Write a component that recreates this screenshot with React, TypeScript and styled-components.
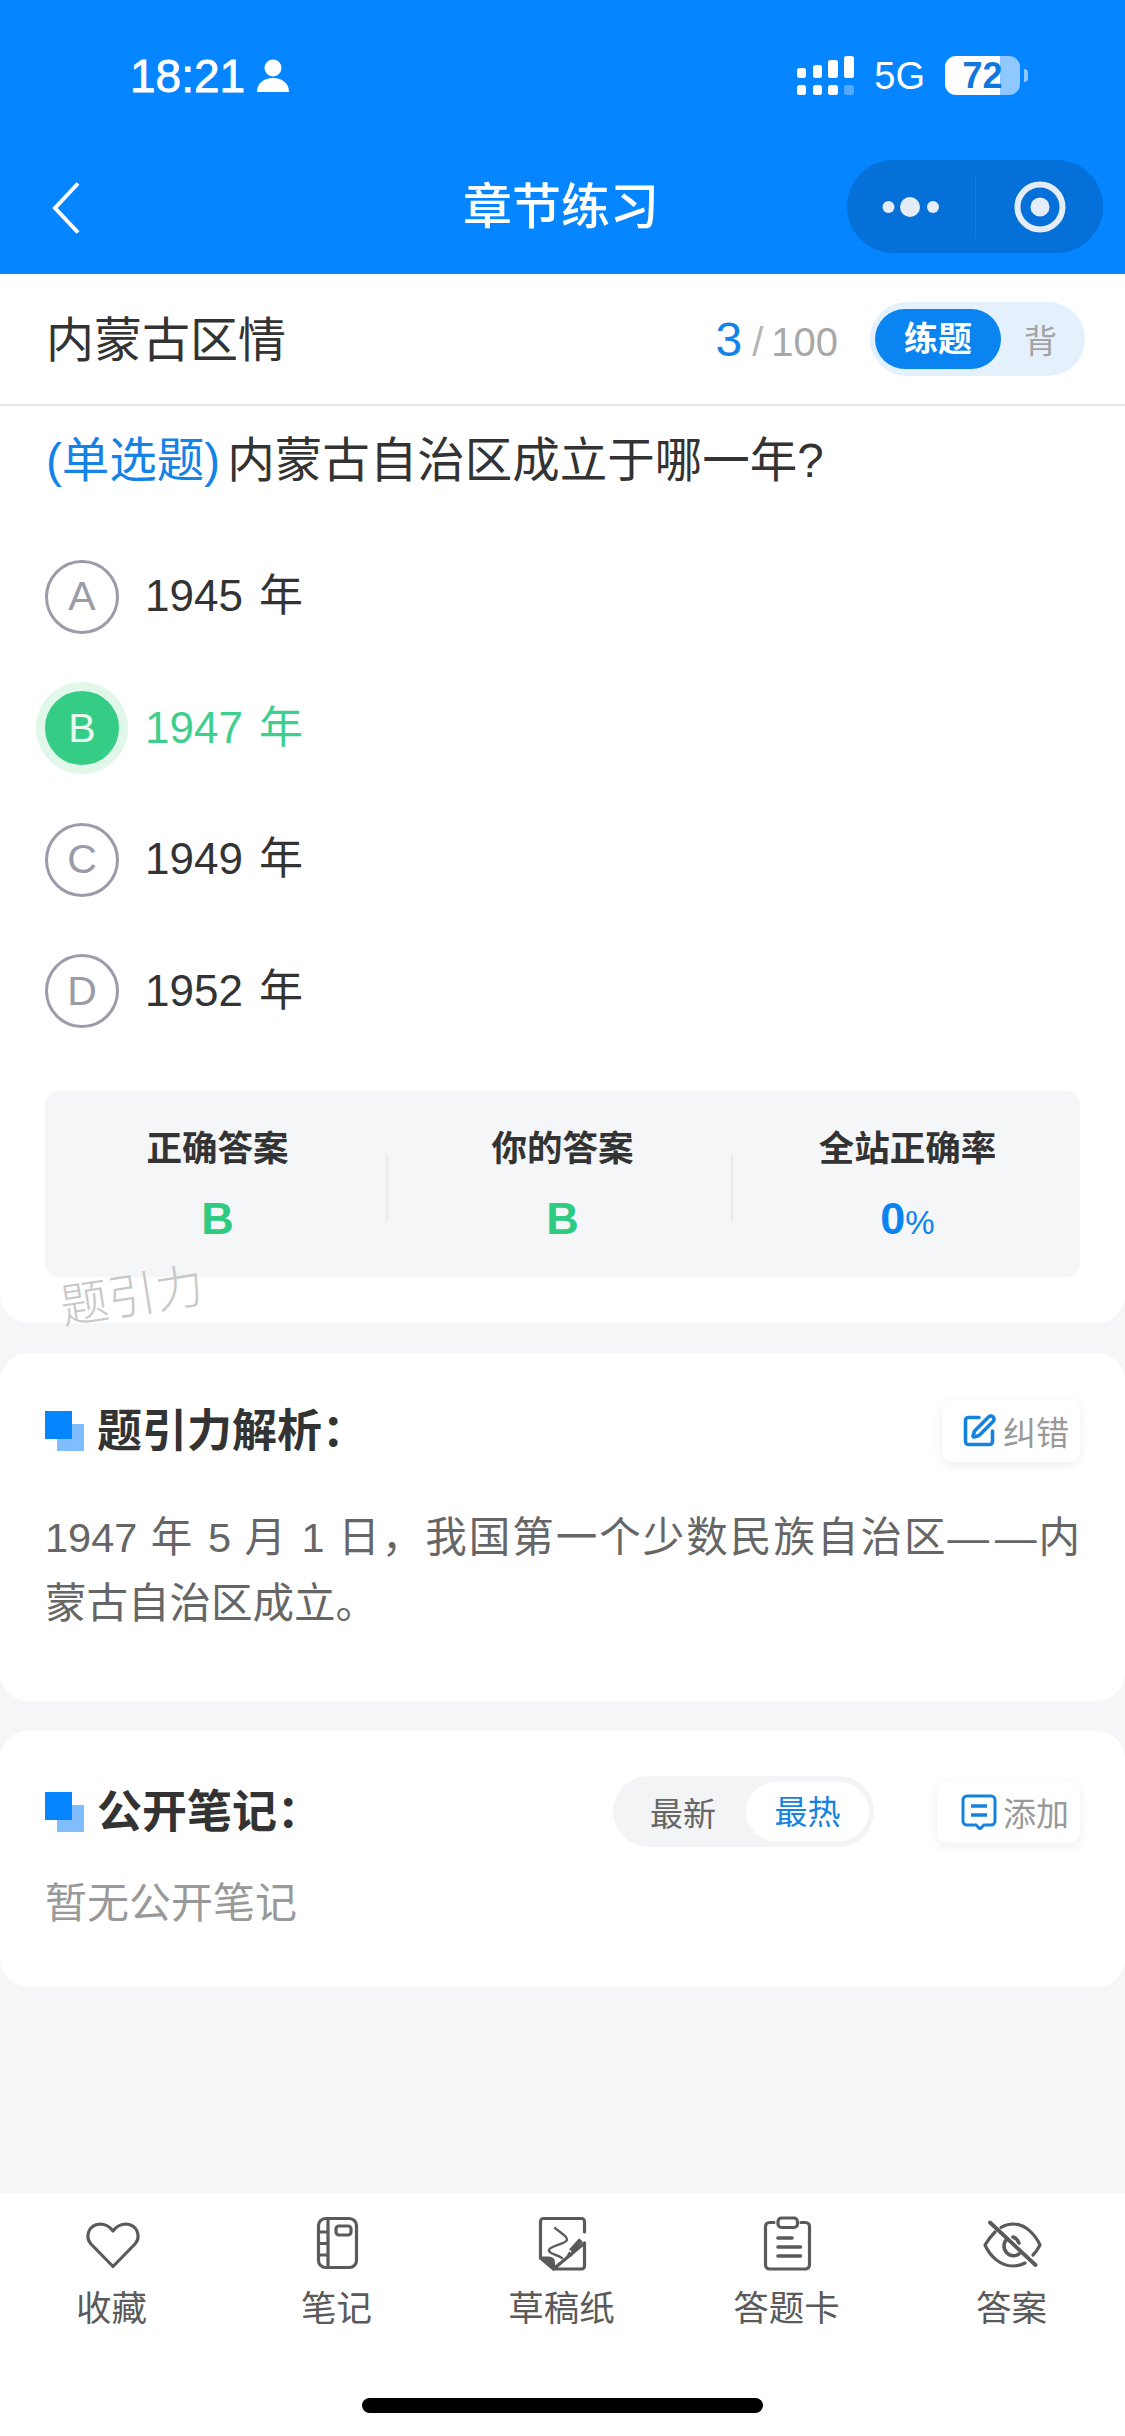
import { FunctionComponent } from "react";
import styled, { createGlobalStyle } from "styled-components";
import { SquarePen } from "lucide-react";

const GlobalStyle = createGlobalStyle`
  html, body {
    margin: 0;
    padding: 0;
    background: #f4f6f8;
  }
  * {
    box-sizing: border-box;
  }
`;

const Page = styled.div`
  width: 1125px;
  height: 2436px;
  display: flex;
  flex-direction: column;
  overflow: hidden;
  background: #f4f6f8;
  font-family: "Liberation Sans", "Noto Sans CJK SC", sans-serif;
  color: #333;
`;

/* blue top area */
const Header = styled.header`
  height: 274px;
  flex: none;
  background: #0585ff;
  color: #fff;
`;

const StatusBar = styled.div`
  height: 152px;
  padding: 48px 105px 0 130px;
  display: flex;
  align-items: flex-start;
  justify-content: space-between;
`;

const StatusSide = styled.div`
  height: 56px;
  display: flex;
  align-items: center;
`;

const Clock = styled.span`
  font-size: 46px;
  line-height: 56px;
  margin-right: 12px;
  -webkit-text-stroke: 0.8px #fff;
`;

const Signal = styled.svg`
  width: 58px;
  height: 40px;
  margin-right: 19px;
`;

const Network = styled.span`
  font-size: 38px;
  line-height: 56px;
  margin-right: 20px;
`;

const Battery = styled.div`
  position: relative;
  width: 75px;
  height: 39px;
  margin-top: -2px;
  border-radius: 11px;
  background: linear-gradient(90deg, #fff 0 73%, rgba(255, 255, 255, 0.55) 73% 100%);
  color: #0f78dc;
  font-size: 36px;
  line-height: 39px;
  font-weight: 700;
  text-align: center;
  &::after {
    content: "";
    position: absolute;
    right: -8px;
    top: 13px;
    width: 4px;
    height: 13px;
    border-radius: 0 4px 4px 0;
    background: rgba(255, 255, 255, 0.55);
  }
`;

const NavBar = styled.div`
  position: relative;
  height: 122px;
  padding: 8px 22px 0 52px;
  display: flex;
  align-items: flex-start;
  justify-content: space-between;
`;

const BackIcon = styled.svg`
  width: 28px;
  height: 52px;
  margin-top: 22px;
`;

const NavTitle = styled.div`
  position: absolute;
  left: 0;
  right: 3px;
  top: 23px;
  text-align: center;
  font-size: 49px;
  line-height: 64px;
  font-weight: 500;
`;

const Capsule = styled.div`
  width: 256px;
  height: 93px;
  border-radius: 47px;
  background: #0570d8;
  display: grid;
  grid-template-columns: 128px 128px;
  align-items: center;
  justify-items: center;
`;

const CapsuleCell = styled.div<{ $divided?: boolean }>`
  width: 100%;
  height: 64px;
  display: flex;
  align-items: center;
  justify-content: center;
  border-left: ${(p) => (p.$divided ? "1px solid #0f7ce0" : "none")};
`;

/* cards */
const Main = styled.main`
  flex: 1;
  display: flex;
  flex-direction: column;
  gap: 30px;
`;

const QuestionCard = styled.section`
  position: relative;
  height: 1049px;
  flex: none;
  background: #fff;
  border-radius: 0 0 28px 28px;
`;

const Card = styled.section<{ $padTop: number; $padBottom: number }>`
  background: #fff;
  border-radius: 28px;
  padding: ${(p) => p.$padTop}px 45px ${(p) => p.$padBottom}px 45px;
`;

const ChapterRow = styled.div`
  height: 132px;
  padding: 0 40px 0 46px;
  display: flex;
  align-items: center;
  border-bottom: 2px solid #e6e6e6;
`;

const ChapterName = styled.div`
  flex: 1;
  margin-top: -6px;
  font-size: 48px;
  color: #333;
`;

const Progress = styled.div`
  display: flex;
  align-items: baseline;
  margin-right: 32px;
  font-size: 40px;
  color: #a8a8a8;
`;

const ProgressNow = styled.span`
  font-size: 48px;
  color: #1483e8;
`;

const ProgressSlash = styled.span`
  margin: 0 8px 0 10px;
  font-weight: 400;
  color: #b4b4b4;
`;

const ModeSwitch = styled.div`
  width: 215px;
  height: 74px;
  padding: 0 5px;
  border-radius: 37px;
  background: #e4f0fc;
  display: flex;
  align-items: center;
  font-size: 34px;
`;

const ModeActive = styled.div`
  width: 126px;
  height: 60px;
  border-radius: 30px;
  background: #0a84f0;
  color: #fff;
  font-weight: 700;
  text-align: center;
  line-height: 60px;
`;

const ModeOther = styled.div`
  flex: 1;
  text-align: center;
  color: #a3a3a3;
  font-size: 33px;
`;

const QuestionText = styled.div`
  margin-top: 22px;
  padding: 0 46px;
  font-size: 47.5px;
  line-height: 66px;
  color: #333;
`;

const QuestionType = styled.span`
  color: #1483e8;
  margin-right: 7px;
`;

const Options = styled.div`
  margin-top: 37px;
  padding: 0 45px;
`;

const OptionRow = styled.div`
  height: 131.5px;
  display: flex;
  align-items: center;
  gap: 26px;
`;

const OptionBadge = styled.div<{ $picked?: boolean }>`
  width: 74px;
  height: 74px;
  border-radius: 50%;
  border: 3px solid ${(p) => (p.$picked ? "#35cd85" : "#9b9ba9")};
  background: ${(p) => (p.$picked ? "#35cd85" : "#fff")};
  box-shadow: ${(p) => (p.$picked ? "0 0 0 9px #e0f7ea" : "none")};
  color: ${(p) => (p.$picked ? "#e8fbf1" : "#9b9ba9")};
  font-size: 41px;
  display: flex;
  align-items: center;
  justify-content: center;
`;

const OptionLabel = styled.div<{ $picked?: boolean }>`
  margin-top: -9px;
  font-size: 44px;
  color: ${(p) => (p.$picked ? "#3ecf8e" : "#333")};
  word-spacing: 4px;
`;

const Stats = styled.div`
  margin: 34px 45px 0;
  height: 186px;
  border-radius: 14px;
  background: #f4f6f8;
  display: grid;
  grid-template-columns: repeat(3, 1fr);
  align-items: center;
`;

const Stat = styled.div<{ $divided?: boolean }>`
  position: relative;
  text-align: center;
  &::after {
    content: "";
    display: ${(p) => (p.$divided ? "block" : "none")};
    position: absolute;
    right: 2px;
    top: 30px;
    bottom: 22px;
    width: 2px;
    background: #e9ebee;
  }
`;

const StatLabel = styled.div`
  font-size: 35.5px;
  line-height: 50px;
  font-weight: 700;
  color: #333;
`;

const StatValue = styled.div<{ $tone: string }>`
  margin-top: 20px;
  height: 50px;
  font-size: 45px;
  line-height: 50px;
  font-weight: 700;
  color: ${(p) => p.$tone};
`;

const StatUnit = styled.span`
  font-size: 33px;
  font-weight: 400;
`;

const Watermark = styled.div`
  position: absolute;
  left: 60px;
  top: 991px;
  font-size: 48px;
  line-height: 64px;
  font-weight: 300;
  color: #c8c8c8;
  transform: rotate(-9deg);
`;

const CardHead = styled.div<{ $height: number }>`
  height: ${(p) => p.$height}px;
  display: flex;
  align-items: center;
`;

const TitleMark = styled.svg`
  width: 39px;
  height: 40px;
  margin-right: 13px;
  flex: none;
`;

const CardTitle = styled.h2`
  flex: 1;
  margin: 2px 0 0;
  font-size: 45px;
  line-height: 60px;
  font-weight: 700;
  color: #333;
`;

const ChipButton = styled.div<{ $padLeft: number }>`
  height: 62px;
  padding: 0 11px 0 ${(p) => p.$padLeft}px;
  border-radius: 10px;
  background: #fff;
  box-shadow: 0 3px 12px rgba(0, 0, 0, 0.07);
  display: flex;
  align-items: center;
  gap: 6px;
  font-size: 33px;
  color: #999;
  svg {
    flex: none;
  }
`;

const BodyText = styled.div`
  margin-top: 43px;
  font-size: 41.5px;
  line-height: 66px;
  color: #666;
`;

const BodyLine = styled.div<{ $justified?: boolean }>`
  text-align: justify;
  text-align-last: ${(p) => (p.$justified ? "justify" : "left")};
  white-space: nowrap;
`;

const Dash = styled.span`
  margin-right: 6px;
`;

const EmptyText = styled.div`
  margin-top: 24px;
  font-size: 42px;
  line-height: 66px;
  color: #999;
`;

const SortSwitch = styled.div`
  width: 261px;
  height: 71px;
  margin-right: 63px;
  padding: 6px 5px 6px 37px;
  border-radius: 36px;
  background: #f3f4f6;
  display: flex;
  align-items: center;
  justify-content: space-between;
  font-size: 33px;
  color: #666;
`;

const SortActive = styled.div`
  width: 123px;
  height: 59px;
  border-radius: 30px;
  background: #fff;
  color: #1483e0;
  text-align: center;
  line-height: 62px;
`;

/* bottom bar */
const Footer = styled.footer`
  height: 243px;
  flex: none;
  background: #fff;
  padding-top: 22px;
  display: flex;
  flex-direction: column;
`;

const Tabs = styled.nav`
  display: grid;
  grid-template-columns: repeat(5, 1fr);
`;

const Tab = styled.div`
  display: flex;
  flex-direction: column;
  align-items: center;
  color: #5a5a5a;
`;

const TabIcon = styled.svg`
  width: 60px;
  height: 60px;
  fill: none;
  stroke: #5a5a5a;
  stroke-width: 3.2;
  stroke-linecap: round;
  stroke-linejoin: round;
`;

const TabLabel = styled.div`
  margin-top: 9px;
  margin-right: 2px;
  font-size: 35.5px;
  line-height: 50px;
`;

const HomeIndicator = styled.div`
  width: 401px;
  height: 15px;
  margin: 64px auto 0;
  border-radius: 8px;
  background: #000;
`;

const options = [
  { key: "A", label: "1945 年" },
  { key: "B", label: "1947 年", picked: true },
  { key: "C", label: "1949 年" },
  { key: "D", label: "1952 年" },
];

const Mark: FunctionComponent = () => (
  <TitleMark viewBox="0 0 39 40">
    <rect x="12" y="13" width="27" height="27" fill="#7fbdfd" />
    <rect x="0" y="0" width="27" height="28" fill="#0585ff" />
  </TitleMark>
);

const App: FunctionComponent = () => {
  return (
    <Page>
      <GlobalStyle />
      <Header>
        <StatusBar>
          <StatusSide>
            <Clock>18:21</Clock>
            <svg width="32" height="34" viewBox="0 0 32 34">
              <circle cx="16" cy="9" r="8.5" fill="#fff" />
              <path d="M0 33c0-9 7-14 16-14s16 5 16 14z" fill="#fff" />
            </svg>
          </StatusSide>
          <StatusSide>
            <Signal viewBox="0 0 58 40">
              <g fill="#fff">
                <rect x="0" y="12" width="9" height="10" rx="2.5" />
                <rect x="16" y="9" width="9" height="13" rx="2.5" />
                <rect x="31" y="4" width="10" height="18" rx="2.5" />
                <rect x="47" y="0" width="10" height="22" rx="2.5" />
                <rect x="0" y="29" width="9" height="10" rx="2.5" />
                <rect x="16" y="29" width="9" height="10" rx="2.5" />
                <rect x="31" y="29" width="10" height="10" rx="2.5" />
                <rect x="47" y="29" width="10" height="10" rx="2.5" opacity="0.3" />
              </g>
            </Signal>
            <Network>5G</Network>
            <Battery>72</Battery>
          </StatusSide>
        </StatusBar>
        <NavBar>
          <BackIcon viewBox="0 0 28 52">
            <path d="M26 1.5 3 26l23 24.5" fill="none" stroke="#fff" strokeWidth="4" />
          </BackIcon>
          <NavTitle>章节练习</NavTitle>
          <Capsule>
            <CapsuleCell>
              <svg width="58" height="22" viewBox="0 0 58 22">
                <circle cx="6.5" cy="11" r="6" fill="#e4edf6" />
                <circle cx="28" cy="11" r="10" fill="#e4edf6" />
                <circle cx="51" cy="11" r="6" fill="#e4edf6" />
              </svg>
            </CapsuleCell>
            <CapsuleCell $divided>
              <svg width="52" height="52" viewBox="0 0 52 52">
                <circle cx="26" cy="26" r="22.5" fill="none" stroke="#e4edf6" strokeWidth="6" />
                <circle cx="26" cy="26" r="9.5" fill="#e4edf6" />
              </svg>
            </CapsuleCell>
          </Capsule>
        </NavBar>
      </Header>

      <Main>
        <QuestionCard>
          <ChapterRow>
            <ChapterName>内蒙古区情</ChapterName>
            <Progress>
              <ProgressNow>3</ProgressNow>
              <ProgressSlash>/</ProgressSlash>100
            </Progress>
            <ModeSwitch>
              <ModeActive>练题</ModeActive>
              <ModeOther>背</ModeOther>
            </ModeSwitch>
          </ChapterRow>
          <QuestionText>
            <QuestionType>(单选题)</QuestionType>内蒙古自治区成立于哪一年?
          </QuestionText>
          <Options>
            {options.map((o) => (
              <OptionRow key={o.key}>
                <OptionBadge $picked={o.picked}>{o.key}</OptionBadge>
                <OptionLabel $picked={o.picked}>{o.label}</OptionLabel>
              </OptionRow>
            ))}
          </Options>
          <Stats>
            <Stat $divided>
              <StatLabel>正确答案</StatLabel>
              <StatValue $tone="#2fcb82">B</StatValue>
            </Stat>
            <Stat $divided>
              <StatLabel>你的答案</StatLabel>
              <StatValue $tone="#2fcb82">B</StatValue>
            </Stat>
            <Stat>
              <StatLabel>全站正确率</StatLabel>
              <StatValue $tone="#0a84f0">
                0<StatUnit>%</StatUnit>
              </StatValue>
            </Stat>
          </Stats>
          <Watermark>题引力</Watermark>
        </QuestionCard>

        <Card $padTop={47} $padBottom={64}>
          <CardHead $height={62}>
            <Mark />
            <CardTitle>题引力解析：</CardTitle>
            <ChipButton $padLeft={19}>
              <SquarePen size={36} color="#1483e0" strokeWidth={2.4} />
              纠错
            </ChipButton>
          </CardHead>
          <BodyText>
            <BodyLine $justified>
              1947 年 5 月 1 日，我国第一个少数民族自治区<Dash>—</Dash>—内
            </BodyLine>
            <BodyLine>蒙古自治区成立。</BodyLine>
          </BodyText>
        </Card>

        <Card $padTop={45} $padBottom={50}>
          <CardHead $height={71}>
            <Mark />
            <CardTitle>公开笔记：</CardTitle>
            <SortSwitch>
              最新
              <SortActive>最热</SortActive>
            </SortSwitch>
            <ChipButton $padLeft={24}>
              <svg width="36" height="36" viewBox="0 0 36 36">
                <path
                  d="M6 2h24a4 4 0 0 1 4 4v21a4 4 0 0 1-4 4h-7l-4 4-4-4H6a4 4 0 0 1-4-4V6a4 4 0 0 1 4-4z"
                  fill="none"
                  stroke="#1483e0"
                  strokeWidth="3"
                />
                <path d="M10 12h16M10 21h16" stroke="#1483e0" strokeWidth="3.4" />
              </svg>
              添加
            </ChipButton>
          </CardHead>
          <EmptyText>暂无公开笔记</EmptyText>
        </Card>
      </Main>

      <Footer>
        <Tabs>
          <Tab>
            <TabIcon viewBox="0 0 60 60">
              <path d="M30 51.5 8 29C2 22 5 10 17 9c6 0 10 3 13 7 3-4 7-7 13-7 12 1 15 13 9 20z" />
            </TabIcon>
            <TabLabel>收藏</TabLabel>
          </Tab>
          <Tab>
            <TabIcon viewBox="0 0 60 60">
              <rect x="10.5" y="3.5" width="38" height="49" rx="7" />
              <path d="M20 3.5v49M10.5 17H20M10.5 28.5H20M10.5 40H20" />
              <rect x="28" y="11" width="15" height="9" rx="3" />
            </TabIcon>
            <TabLabel>笔记</TabLabel>
          </Tab>
          <Tab>
            <TabIcon viewBox="0 0 60 60">
              <path d="M7.5 43V6.5a3 3 0 0 1 3-3h38a3 3 0 0 1 3 3V17M51.5 28v23a3 3 0 0 1-3 3h-28z" />
              <path d="M7.5 43h8q5 0 5 5v6z" fill="#5a5a5a" />
              <path d="M22 13c4 4 13 8 12 12-1 4-18 6-18 10-1 3 8 5 13 8" strokeWidth="2.4" />
              <path d="M48 25 38 36" strokeWidth="5" strokeLinecap="butt" />
              <path d="M36.5 37.5 34 42l4.5-1.5" strokeWidth="1.8" />
            </TabIcon>
            <TabLabel>草稿纸</TabLabel>
          </Tab>
          <Tab>
            <TabIcon viewBox="0 0 60 60">
              <path d="M16 7.5h-4.5a4 4 0 0 0-4 4V50a4 4 0 0 0 4 4h36a4 4 0 0 0 4-4V11.5a4 4 0 0 0-4-4H43" />
              <rect x="20" y="3" width="19.5" height="9.5" rx="3.5" />
              <path d="M20 23h14M20 32h22.5M20 41h22.5" strokeWidth="3.6" />
            </TabIcon>
            <TabLabel>答题卡</TabLabel>
          </Tab>
          <Tab>
            <TabIcon viewBox="0 0 60 60">
              <path d="M18 12.5C22 10 26 9 30 9c12 0 22 10 27 21-2 4-4 7-7 10M12 17C8 21 5 25 2 30c5 11 15 21 28 21 4 0 8-1 12-3" />
              <path d="M24 24c-4 4-4 10 0 14s9 3 12 1M36 28c-1-3-3-5-6-6" strokeWidth="3.6" />
              <path d="M7 7.5 52.5 50" strokeWidth="3.8" />
            </TabIcon>
            <TabLabel>答案</TabLabel>
          </Tab>
        </Tabs>
        <HomeIndicator />
      </Footer>
    </Page>
  );
};

export default App;
